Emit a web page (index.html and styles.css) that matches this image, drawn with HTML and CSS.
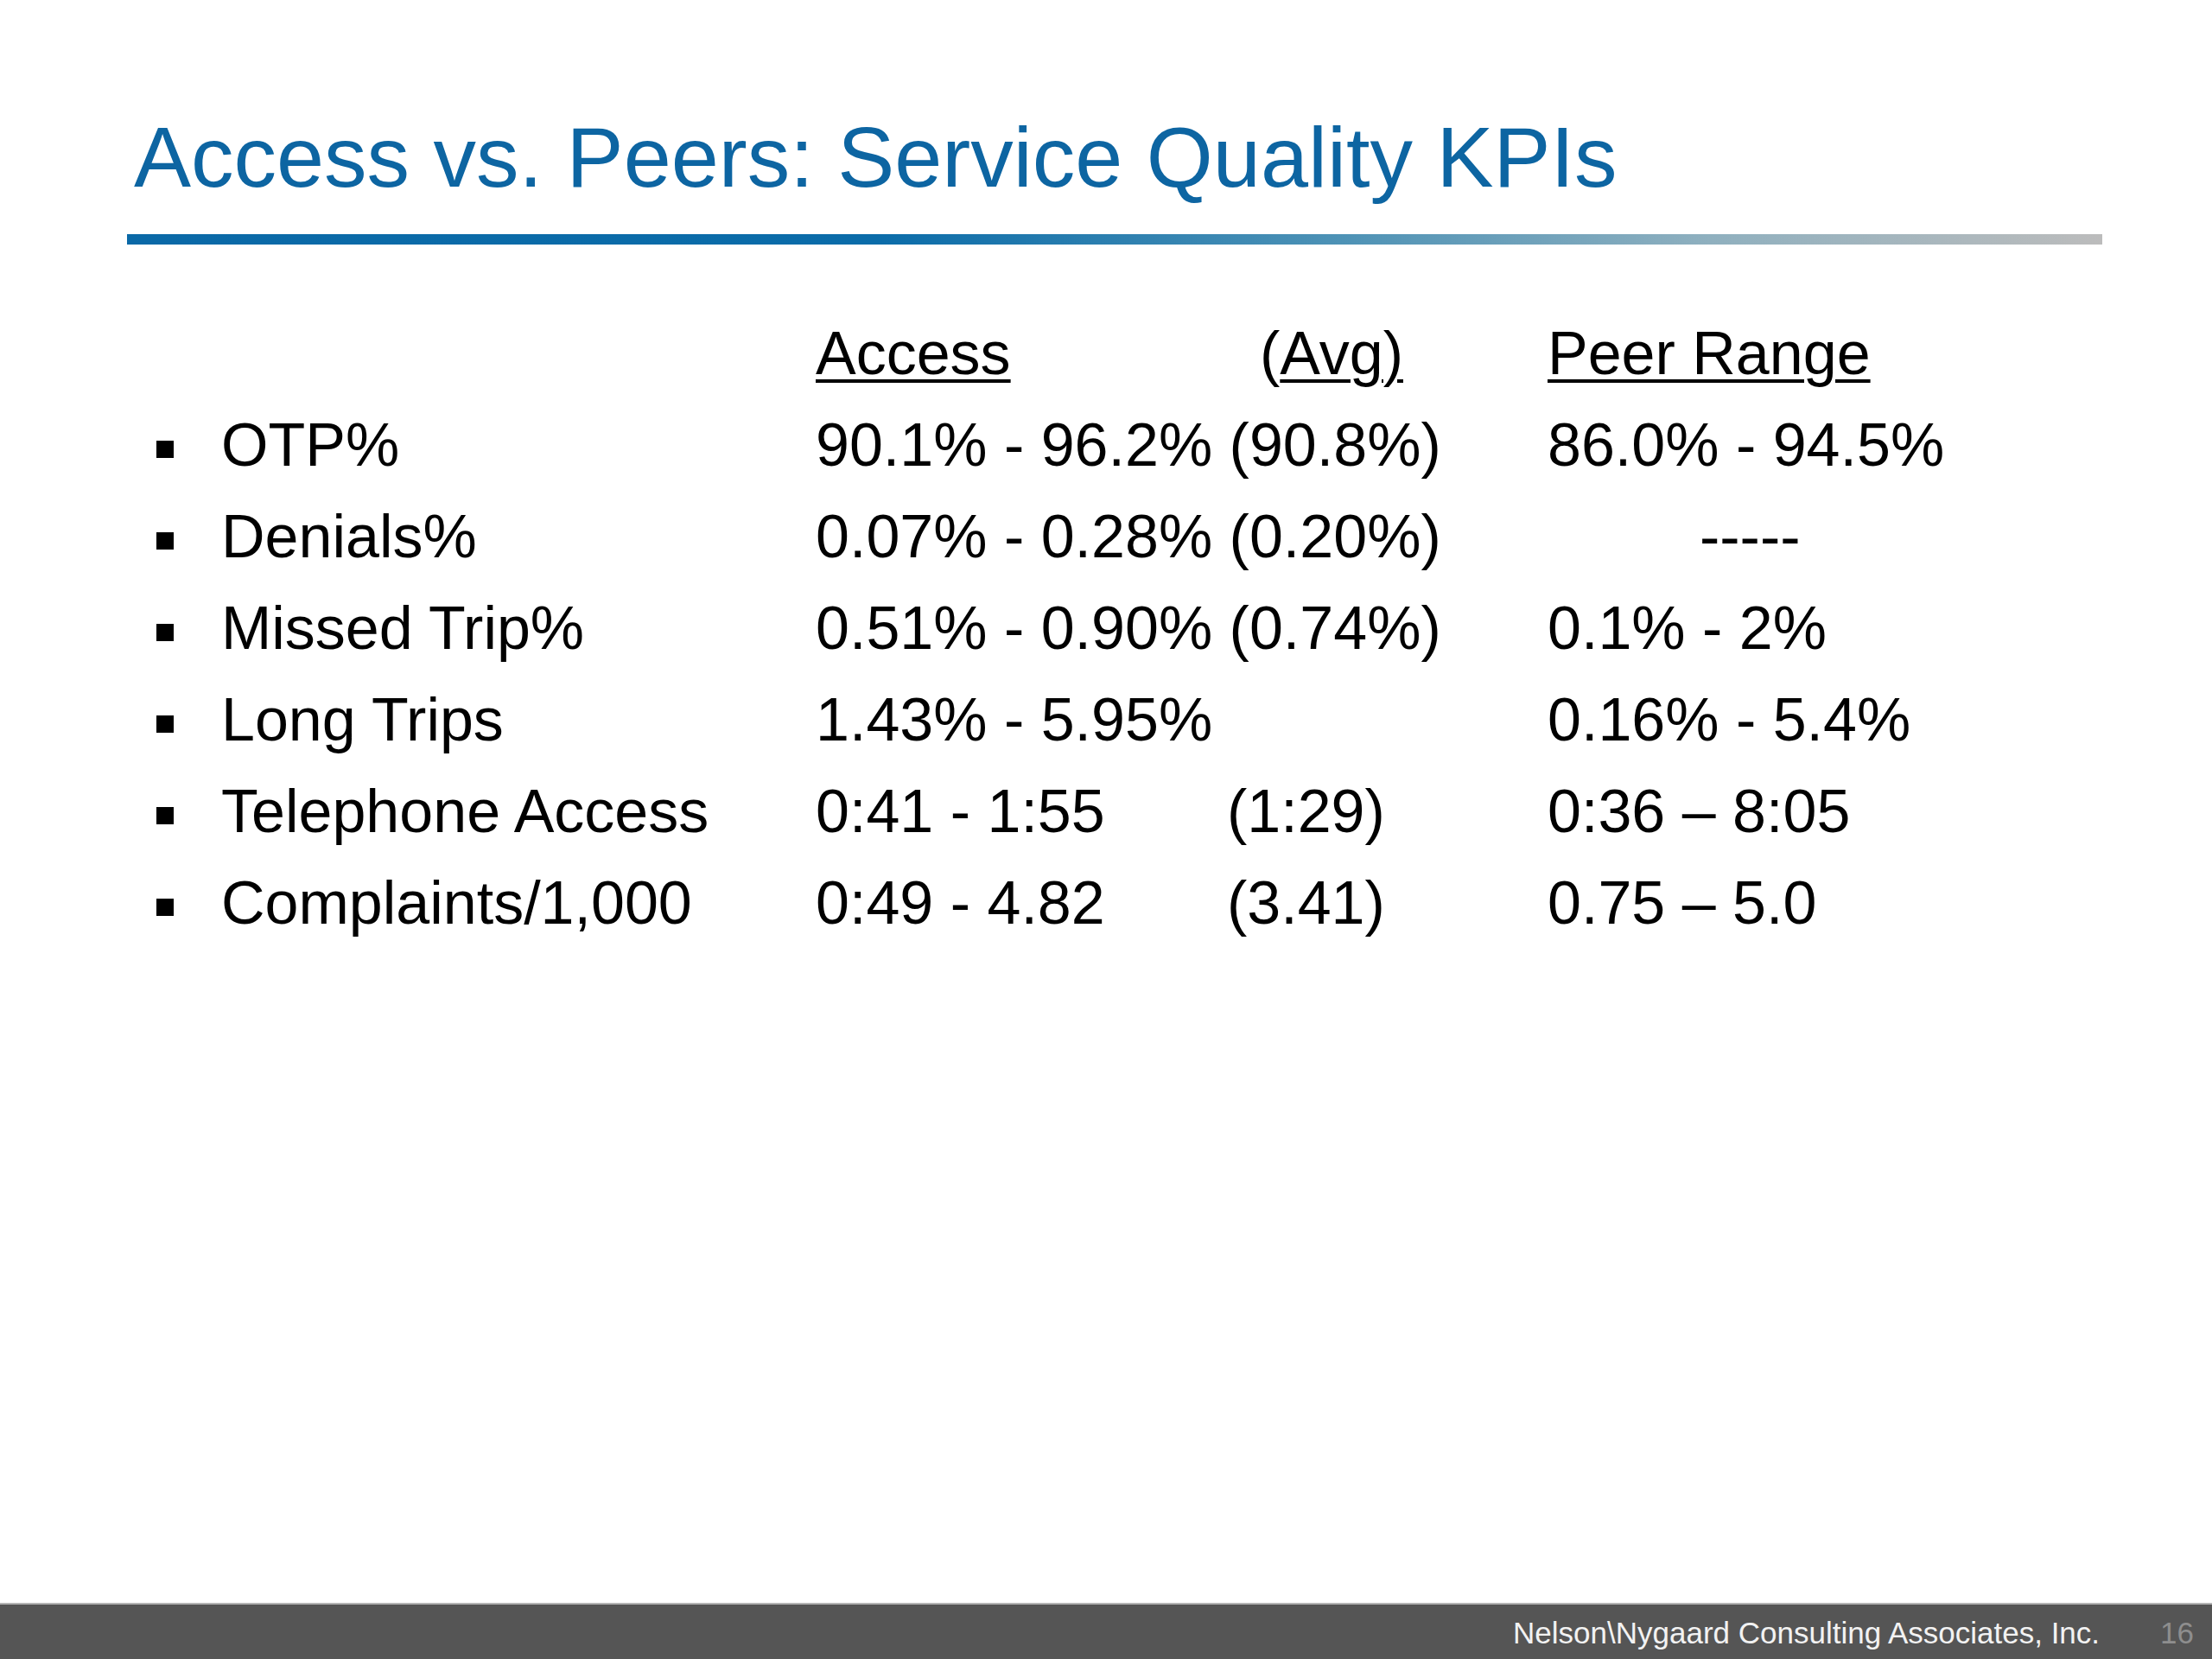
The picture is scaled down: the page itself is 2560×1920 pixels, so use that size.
FILE: index.html
```html
<!DOCTYPE html>
<html lang="en">
<head>
<meta charset="utf-8">
<title>Access vs. Peers: Service Quality KPIs</title>
<link rel="stylesheet" href="styles.css">
</head>
<body>
<div class="slide">
  <header class="head">
    <h1 class="title">Access vs. Peers: Service Quality KPIs</h1>
    <div class="rule"></div>
  </header>
  <main class="content">
    <div class="kpi">
      <div class="cell"></div>
      <div class="cell"></div>
      <div class="cell"><span class="ul">Access</span></div>
      <div class="cell avg-head">(<span class="ul">Avg)</span></div>
      <div class="cell"><span class="ul">Peer Range</span></div>

      <div class="cell bullet-cell"><span class="bullet"></span></div>
      <div class="cell">OTP%</div>
      <div class="cell span2">90.1% - 96.2% (90.8%)</div>
      <div class="cell">86.0% - 94.5%</div>

      <div class="cell bullet-cell"><span class="bullet"></span></div>
      <div class="cell">Denials%</div>
      <div class="cell span2">0.07% - 0.28% (0.20%)</div>
      <div class="cell dashes">-----</div>

      <div class="cell bullet-cell"><span class="bullet"></span></div>
      <div class="cell">Missed Trip%</div>
      <div class="cell span2">0.51% - 0.90% (0.74%)</div>
      <div class="cell">0.1% - 2%</div>

      <div class="cell bullet-cell"><span class="bullet"></span></div>
      <div class="cell">Long Trips</div>
      <div class="cell">1.43% - 5.95%</div>
      <div class="cell"></div>
      <div class="cell">0.16% - 5.4%</div>

      <div class="cell bullet-cell"><span class="bullet"></span></div>
      <div class="cell">Telephone Access</div>
      <div class="cell">0:41 - 1:55</div>
      <div class="cell">(1:29)</div>
      <div class="cell">0:36 – 8:05</div>

      <div class="cell bullet-cell"><span class="bullet"></span></div>
      <div class="cell">Complaints/1,000</div>
      <div class="cell">0:49 - 4.82</div>
      <div class="cell">(3.41)</div>
      <div class="cell">0.75 – 5.0</div>
    </div>
  </main>
  <footer class="foot">
    <span class="company">Nelson\Nygaard Consulting Associates, Inc.</span>
    <span class="page">16</span>
  </footer>
</div>
</body>
</html>
```

FILE: styles.css
```css
html, body {
  margin: 0;
  padding: 0;
  background: #ffffff;
}

.slide {
  width: 2560px;
  height: 1920px;
  display: flex;
  flex-direction: column;
  background: #ffffff;
  font-family: "Liberation Sans", Arial, Helvetica, sans-serif;
  color: #000000;
}

.head {
  padding-top: 132px;
}

.title {
  margin: 0 0 0 155px;
  font-size: 99px;
  line-height: 100px;
  font-weight: normal;
  color: #0d65a2;
}

.rule {
  margin: 39px 0 0 147px;
  width: 2286px;
  height: 12px;
  background: linear-gradient(to right, #0a69a7 0%, #0b6ca9 38%, #4f93b6 62%, #8fb0bf 80%, #bcbcbc 100%);
}

.content {
  flex: 1;
  padding-top: 73px;
}

.kpi {
  display: grid;
  grid-template-columns: 75px 688px 476px 371px auto;
  grid-auto-rows: 106px;
  padding-left: 181px;
  font-size: 70px;
  line-height: 106px;
}

.cell {
  white-space: nowrap;
}

.span2 {
  grid-column: span 2;
}

.ul {
  text-decoration: underline;
  text-decoration-thickness: 4px;
  text-underline-offset: 6px;
}

.avg-head {
  padding-left: 38px;
}

.dashes {
  padding-left: 176px;
}

.bullet-cell {
  display: flex;
  align-items: flex-start;
}

.bullet {
  display: block;
  width: 20px;
  height: 20px;
  margin-top: 48px;
  background: #000000;
}

.foot {
  flex: none;
  height: 50px;
  border-top: 2px solid #b4b4b4;
  background: #555555;
  display: flex;
  align-items: flex-start;
  justify-content: flex-end;
  padding: 13px 21px 0 0;
  box-sizing: content-box;
  font-size: 35px;
  line-height: 40px;
}

.company {
  color: #f2f2f2;
}

.page {
  margin-left: 70px;
  color: #8e8e8e;
}
```
